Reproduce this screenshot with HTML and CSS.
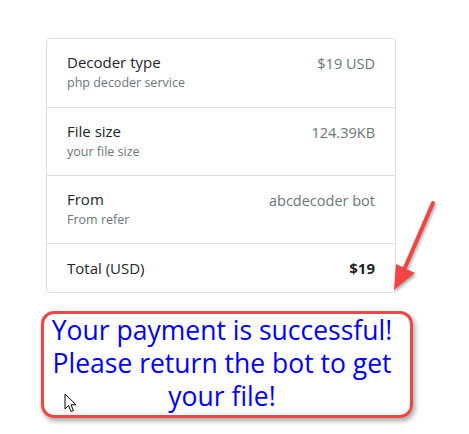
FILE: index.html
```html
<!DOCTYPE html>
<html>
<head>
<meta charset="utf-8">
<link rel="stylesheet" href="styles.css">
</head>
<body>
<div class="page">
  <ul class="list">
    <li class="item">
      <div class="info">
        <div class="title">Decoder type</div>
        <div class="sub">php decoder service</div>
      </div>
      <span class="value">$19 USD</span>
    </li>
    <li class="item">
      <div class="info">
        <div class="title">File size</div>
        <div class="sub">your file size</div>
      </div>
      <span class="value">124.39KB</span>
    </li>
    <li class="item">
      <div class="info">
        <div class="title">From</div>
        <div class="sub">From refer</div>
      </div>
      <span class="value">abcdecoder bot</span>
    </li>
    <li class="item total">
      <span class="title">Total (USD)</span>
      <strong class="amount">$19</strong>
    </li>
  </ul>
  <div class="notice">Your payment is successful! Please return the bot to get your file!</div>

  <svg class="arrow" width="60" height="110" viewBox="0 0 60 110">
    <defs>
      <filter id="sh" x="-50%" y="-50%" width="200%" height="200%">
        <feDropShadow dx="1" dy="2" stdDeviation="1.5" flood-color="#000" flood-opacity="0.35"/>
      </filter>
    </defs>
    <g filter="url(#sh)">
      <line x1="53" y1="13" x2="24" y2="80" stroke="#f04545" stroke-width="4" stroke-linecap="round"/>
      <polygon points="14,100 16,74 35,83" fill="#f04545"/>
    </g>
  </svg>

  <svg class="cursor" width="14" height="21" viewBox="0 0 14 21">
    <path d="M1 1 L1 16 L4.5 12.5 L7 18.5 L9.5 17.5 L7 11.8 L12 11.8 Z" fill="#fff" stroke="#000" stroke-width="1" stroke-linejoin="round"/>
  </svg>
</div>
</body>
</html>
```

FILE: styles.css
```css
* { box-sizing: border-box; }
html, body { margin: 0; padding: 0; background: #fff; }
body {
  font-family: "Open Sans", "Noto Sans", sans-serif;
  color: #212529;
}
.page {
  position: relative;
  width: 469px;
  height: 434px;
  padding: 38px 0 0 46px;
}
.list {
  list-style: none;
  margin: 0;
  padding: 0;
  width: 350px;
  border: 1px solid #dfdfdf;
  border-radius: 4px;
  background: #fff;
}
.item {
  display: flex;
  justify-content: space-between;
  align-items: flex-start;
  padding: 13px 20px 12px 20px;
  border-top: 1px solid #dfdfdf;
}
.item:first-child {
  border-top: 0;
  padding-top: 13px;
  padding-bottom: 13px;
}
.title {
  font-size: 15px;
  line-height: 20px;
  color: #212529;
}
.sub {
  font-size: 12.5px;
  line-height: 22px;
  color: #6c757d;
}
.value {
  font-size: 14.5px;
  line-height: 24px;
  color: #6c757d;
}
.total {
  align-items: center;
  padding: 14px 20px;
}
.amount {
  font-size: 15px;
  font-weight: 700;
  line-height: 20px;
}
.notice {
  margin: 18px 0 0 -5px;
  width: 372px;
  height: 107px;
  border: 3px solid #f04545;
  border-radius: 13px;
  box-shadow: 2px 3px 5px rgba(0,0,0,0.35);
  color: #0000ff;
  font-size: 26.5px;
  line-height: 33px;
  text-align: center;
  padding: 0 11px 0 1px;
}
.arrow {
  position: absolute;
  left: 380px;
  top: 190px;
}
.cursor {
  position: absolute;
  left: 64px;
  top: 393px;
}
```
